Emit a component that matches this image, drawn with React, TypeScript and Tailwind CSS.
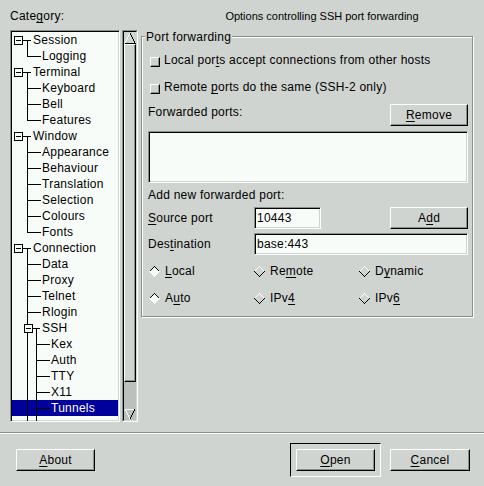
import React from 'react';

// GTK1-style bevels
const raised =
  'bg-[#d0d4d0] border border-t-white border-l-white border-r-black border-b-black shadow-[inset_-1px_-1px_0_#8c908c]';
const sunken =
  'border border-t-[#8c908c] border-l-[#8c908c] border-r-white border-b-white shadow-[inset_1px_1px_0_#000,inset_-1px_-1px_0_#d0d4d0]';

const M = ({ c }: { c: string }) => <span className="underline underline-offset-[2px]">{c}</span>;

type Kind = 'root' | 'child' | 'last' | 'ssh' | 'leaf2';

interface TreeItem {
  id: string;
  label: string;
  kind: Kind;
  selected?: boolean;
}

const treeItems: TreeItem[] = [
  { id: 'session', label: 'Session', kind: 'root' },
  { id: 'logging', label: 'Logging', kind: 'last' },
  { id: 'terminal', label: 'Terminal', kind: 'root' },
  { id: 'keyboard', label: 'Keyboard', kind: 'child' },
  { id: 'bell', label: 'Bell', kind: 'child' },
  { id: 'features', label: 'Features', kind: 'last' },
  { id: 'window', label: 'Window', kind: 'root' },
  { id: 'appearance', label: 'Appearance', kind: 'child' },
  { id: 'behaviour', label: 'Behaviour', kind: 'child' },
  { id: 'translation', label: 'Translation', kind: 'child' },
  { id: 'selection', label: 'Selection', kind: 'child' },
  { id: 'colours', label: 'Colours', kind: 'child' },
  { id: 'fonts', label: 'Fonts', kind: 'last' },
  { id: 'connection', label: 'Connection', kind: 'root' },
  { id: 'data', label: 'Data', kind: 'child' },
  { id: 'proxy', label: 'Proxy', kind: 'child' },
  { id: 'telnet', label: 'Telnet', kind: 'child' },
  { id: 'rlogin', label: 'Rlogin', kind: 'child' },
  { id: 'ssh', label: 'SSH', kind: 'ssh' },
  { id: 'kex', label: 'Kex', kind: 'leaf2' },
  { id: 'auth', label: 'Auth', kind: 'leaf2' },
  { id: 'tty', label: 'TTY', kind: 'leaf2' },
  { id: 'x11', label: 'X11', kind: 'leaf2' },
  { id: 'tunnels', label: 'Tunnels', kind: 'leaf2', selected: true },
  // next row, scrolled out of view: only its connector lines peek in
  { id: 'more', label: '', kind: 'leaf2' }
];

const indent: Record<Kind, string> = {
  root: 'pl-[21px]',
  child: 'pl-[30px]',
  last: 'pl-[30px]',
  ssh: 'pl-[30px]',
  leaf2: 'pl-[39px]'
};

const Expander = ({ x }: { x: number }) => (
  <>
    <rect x={x + 0.5} y={4.5} width={8} height={8} fill="#f8fcf8" stroke="#000" />
    <rect x={x + 2} y={8} width={5} height={1} fill="#000" />
  </>
);

const TreeLines = ({ kind }: { kind: Kind }) => (
  <svg
    className="absolute left-0 top-0 pointer-events-none"
    width="44"
    height="16"
    shapeRendering="crispEdges"
  >
    {kind === 'root' && (
      <>
        <rect x={11} y={8} width={8} height={1} fill="#000" />
        <rect x={15} y={8} width={1} height={8} fill="#000" />
        <Expander x={2} />
      </>
    )}
    {(kind === 'child' || kind === 'last') && (
      <>
        <rect x={15} y={0} width={1} height={kind === 'last' ? 9 : 16} fill="#000" />
        <rect x={15} y={8} width={14} height={1} fill="#000" />
      </>
    )}
    {kind === 'ssh' && (
      <>
        <rect x={15} y={0} width={1} height={16} fill="#000" />
        <rect x={21} y={8} width={7} height={1} fill="#000" />
        <rect x={24} y={8} width={1} height={8} fill="#000" />
        <Expander x={12} />
      </>
    )}
    {kind === 'leaf2' && (
      <>
        <rect x={15} y={0} width={1} height={16} fill="#000" />
        <rect x={24} y={0} width={1} height={16} fill="#000" />
        <rect x={24} y={8} width={14} height={1} fill="#000" />
      </>
    )}
  </svg>
);

const Tree = () => (
  <div className={`w-[110px] h-[392px] p-[1px] bg-[#f8fcf8] overflow-hidden ${sunken}`}>
    {treeItems.map((item) => (
      <div
        key={item.id}
        className={`relative h-4 whitespace-nowrap ${indent[item.kind]} ${
          item.selected ? 'bg-[#00009c] text-white' : ''
        }`}
      >
        {item.label}
        <TreeLines kind={item.kind} />
      </div>
    ))}
  </div>
);

const Scrollbar = () => (
  <div className="w-4 h-[392px] border border-t-[#8c908c] border-l-[#8c908c] border-r-white border-b-white">
    <div className="h-full flex flex-col bg-[#bcc0bc] border border-t-black border-l-black border-r-[#d0d4d0] border-b-[#d0d4d0]">
      <div className="h-[12px] bg-[#d0d4d0] flex items-center justify-center">
        <svg width="12" height="12" shapeRendering="crispEdges">
          <polygon points="6,1 11,11 1,11" fill="#d0d4d0" />
          <polyline points="1,11 6,1" fill="none" stroke="#fff" />
          <polyline points="6,1 11,11 1,11" fill="none" stroke="#000" />
        </svg>
      </div>
      <div className={`h-[338px] ${raised}`} />
      <div className="flex-1" />
      <div className="h-[12px] flex items-center justify-center">
        <svg width="12" height="12" shapeRendering="crispEdges">
          <polyline points="6,11 1,1 11,1" fill="none" stroke="#fff" />
          <polyline points="11,1 6,11" fill="none" stroke="#000" />
        </svg>
      </div>
    </div>
  </div>
);

const Button = ({ children, className = '' }: { children: React.ReactNode; className?: string }) => (
  <div className={`h-[22px] flex items-center justify-center ${raised} ${className}`}>{children}</div>
);

const Entry = ({ value, className = '' }: { value: string; className?: string }) => (
  <div className={`h-[22px] pl-[2px] flex items-center bg-[#f8fcf8] ${sunken} ${className}`}>{value}</div>
);

const Check = () => <span className={`w-[10px] h-[10px] mt-[4px] shrink-0 ${raised}`} />;

const Diamond = ({ on }: { on?: boolean }) => (
  <svg width="11" height="11" className="shrink-0" shapeRendering="crispEdges">
    <polygon points="5.5,0.5 10.5,5.5 5.5,10.5 0.5,5.5" fill={on ? '#f8fcf8' : '#d0d4d0'} />
    <polyline points="0.5,5.5 5.5,0.5 10.5,5.5" fill="none" stroke={on ? '#000' : '#fff'} />
    <polyline points="0.5,5.5 5.5,10.5 10.5,5.5" fill="none" stroke={on ? '#fff' : '#000'} />
  </svg>
);

const Radio = ({ on, children }: { on?: boolean; children: React.ReactNode }) => (
  <div className="w-[105px] pl-[1px] flex items-center gap-[5px]">
    <Diamond on={on} />
    <span>{children}</span>
  </div>
);

export default function App() {
  return (
    <div className="w-[484px] h-[486px] flex flex-col overflow-hidden bg-[#d0d4d0] text-black text-[12px] leading-4 tracking-[0.25px] [font-family:'Liberation_Sans',Arial,sans-serif]">
      <div className="h-[432px] flex">
        {/* category tree */}
        <div className="w-[141px] pl-[10px] pt-[8px] flex flex-col">
          <div className="h-4">
            Cate<M c="g" />ory:
          </div>
          <div className="mt-[6px] flex gap-[2px]">
            <Tree />
            <Scrollbar />
          </div>
        </div>

        {/* panel */}
        <div className="w-[334px] flex flex-col">
          <div className="h-[24px] pt-[9px] pl-[28px] text-center whitespace-nowrap text-[11px] leading-[14px] tracking-normal">
            Options controlling SSH port forwarding
          </div>
          <div className="mt-[12px] relative w-[332px] h-[281px] border border-[#8c908c] shadow-[inset_1px_1px_0_#fff,1px_1px_0_#fff] pl-[6px] pr-[4px] pt-[13px] flex flex-col">
            <span className="absolute left-[3px] -top-[8px] px-[1px] bg-[#d0d4d0]">Port forwarding</span>

            <div className="h-5 flex items-center gap-[4px] pl-[2px]">
              <Check />
              <span>
                Local por<M c="t" />s accept connections from other hosts
              </span>
            </div>
            <div className="mt-[7px] h-5 flex items-center gap-[4px] pl-[2px]">
              <Check />
              <span>
                Remote <M c="p" />orts do the same (SSH-2 only)
              </span>
            </div>

            <div className="mt-[7px] h-[22px] flex items-start">
              <span>Forwarded ports:</span>
              <Button className="ml-auto w-[78px]">
                <M c="R" />emove
              </Button>
            </div>
            <div className={`mt-[5px] h-[52px] bg-[#f8fcf8] ${sunken}`} />

            <div className="mt-[4px] h-4">Add new forwarded port:</div>
            <div className="mt-[4px] h-[22px] flex items-center">
              <span className="w-[106px]">
                <M c="S" />ource port
              </span>
              <Entry value="10443" className="w-[67px]" />
              <Button className="ml-auto w-[78px]">
                A<M c="d" />d
              </Button>
            </div>
            <div className="mt-[4px] h-[22px] flex items-center">
              <span className="w-[106px]">
                Des<M c="t" />ination
              </span>
              <Entry value="base:443" className="flex-1" />
            </div>

            <div className="mt-[6px] h-5 flex">
              <Radio on>
                <M c="L" />ocal
              </Radio>
              <Radio>
                Re<M c="m" />ote
              </Radio>
              <Radio>
                D<M c="y" />namic
              </Radio>
            </div>
            <div className="mt-[7px] h-5 flex">
              <Radio on>
                A<M c="u" />to
              </Radio>
              <Radio>
                IPv<M c="4" />
              </Radio>
              <Radio>
                IPv<M c="6" />
              </Radio>
            </div>
          </div>
        </div>
      </div>

      <div className="h-[2px] border-t border-t-[#8c908c] border-b border-b-white" />

      <div className="flex-1 flex items-center pl-[16px] pr-[14px]">
        <Button className="w-[79px]">
          <M c="A" />bout
        </Button>
        <div className="ml-auto w-[91px] h-[34px] p-[5px] border border-t-black border-l-black border-r-white border-b-white">
          <Button className="w-full">
            <M c="O" />pen
          </Button>
        </div>
        <Button className="ml-[9px] w-[80px]">
          <M c="C" />ancel
        </Button>
      </div>
    </div>
  );
}
